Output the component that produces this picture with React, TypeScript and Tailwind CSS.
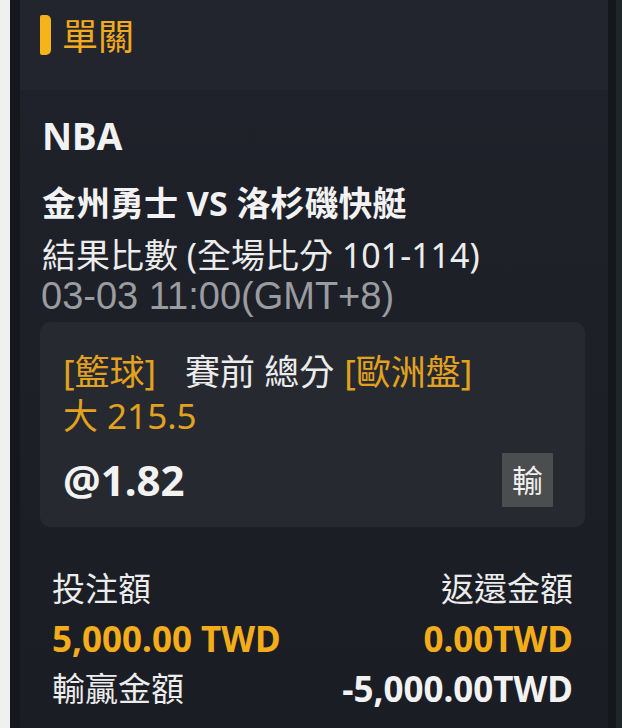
const font = { fontFamily: '"Noto Sans", "Noto Sans CJK TC", sans-serif' };

function Row({ left, right, leftClass, rightClass }: { left: string; right: string; leftClass: string; rightClass: string }) {
  return (
    <div className="flex items-center justify-between h-[50px]">
      <span className={leftClass}>{left}</span>
      <span className={rightClass}>{right}</span>
    </div>
  );
}

export default function App() {
  return (
    <div className="w-[622px] h-[728px] flex overflow-hidden bg-[#eeeeee]" style={font}>
      <div className="w-[10px] bg-[#f0f0f0]" />
      <div className="w-[10px] bg-[#15171c]" />
      <div className="flex-1 flex flex-col bg-gradient-to-b from-[#1f222a] to-[#1b1d25]">
        {/* header */}
        <div className="h-[90px] bg-[#22252d] flex items-start pt-[15px] pl-[20px] gap-[11px]">
          <div className="w-[11px] h-[40px] rounded-r-[5px] rounded-l-[2px] bg-[#f4b41a]" />
          <span className="text-[36px] leading-[44px] text-[#f2ab1c]">單關</span>
        </div>

        <div className="pl-[22px] flex flex-col">
          <div className="mt-[21px] text-[37px] leading-[50px] font-bold text-[#f2f2f2]">NBA</div>
          <div className="mt-[20px] text-[34px] leading-[44px] font-bold text-[#f2f2f2]">金州勇士 VS 洛杉磯快艇</div>
          <div className="mt-[12px] text-[34px] leading-[36px] text-[#ececec]">結果比數 (全場比分 101-114)</div>
          <div
            className="-ml-[1px] mt-[1px] text-[38px] leading-[44px] text-[#9b9ca0]"
            style={{ fontFamily: '"Liberation Sans", sans-serif' }}
          >
            03-03 11:00(GMT+8)
          </div>
        </div>

        <div className="mt-[4px] ml-[20px] mr-[23px] rounded-[10px] bg-[#262930] pl-[23px] pr-[32px] pt-[28px] pb-[20px] flex flex-col">
          <div className="text-[35px] leading-[44px] text-[#ececec] flex">
            <span className="text-[#e3a21e]">[籃球]</span>
            <span className="ml-[29px] mr-[10px]">賽前 總分</span>
            <span className="text-[#e3a21e]">[歐洲盤]</span>
          </div>
          <div className="text-[35px] leading-[44px] text-[#e3a21e]">大 215.5</div>
          <div className="mt-[15px] flex items-center justify-between">
            <span className="text-[42px] leading-[50px] font-bold text-[#f2f2f2]">@1.82</span>
            <span className="w-[51px] h-[54px] flex items-center justify-center bg-[#4c4d4f] text-[31px] text-[#f0f0f0]">輸</span>
          </div>
        </div>

        <div className="mt-[37px] pl-[32px] pr-[35px] flex flex-col">
          <Row left="投注額" right="返還金額" leftClass="text-[33px] text-[#ececec]" rightClass="text-[33px] text-[#ececec]" />
          <Row left="5,000.00 TWD" right="0.00TWD" leftClass="text-[35px] font-bold text-[#f4ad1a]" rightClass="text-[35px] font-bold text-[#f4ad1a]" />
          <Row left="輸贏金額" right="-5,000.00TWD" leftClass="text-[33px] text-[#ececec]" rightClass="text-[35px] font-bold text-[#f2f2f2]" />
        </div>
      </div>
      <div className="w-[8px] bg-[#15171c]" />
      <div className="w-[6px] bg-[#1f2629]" />
    </div>
  );
}
